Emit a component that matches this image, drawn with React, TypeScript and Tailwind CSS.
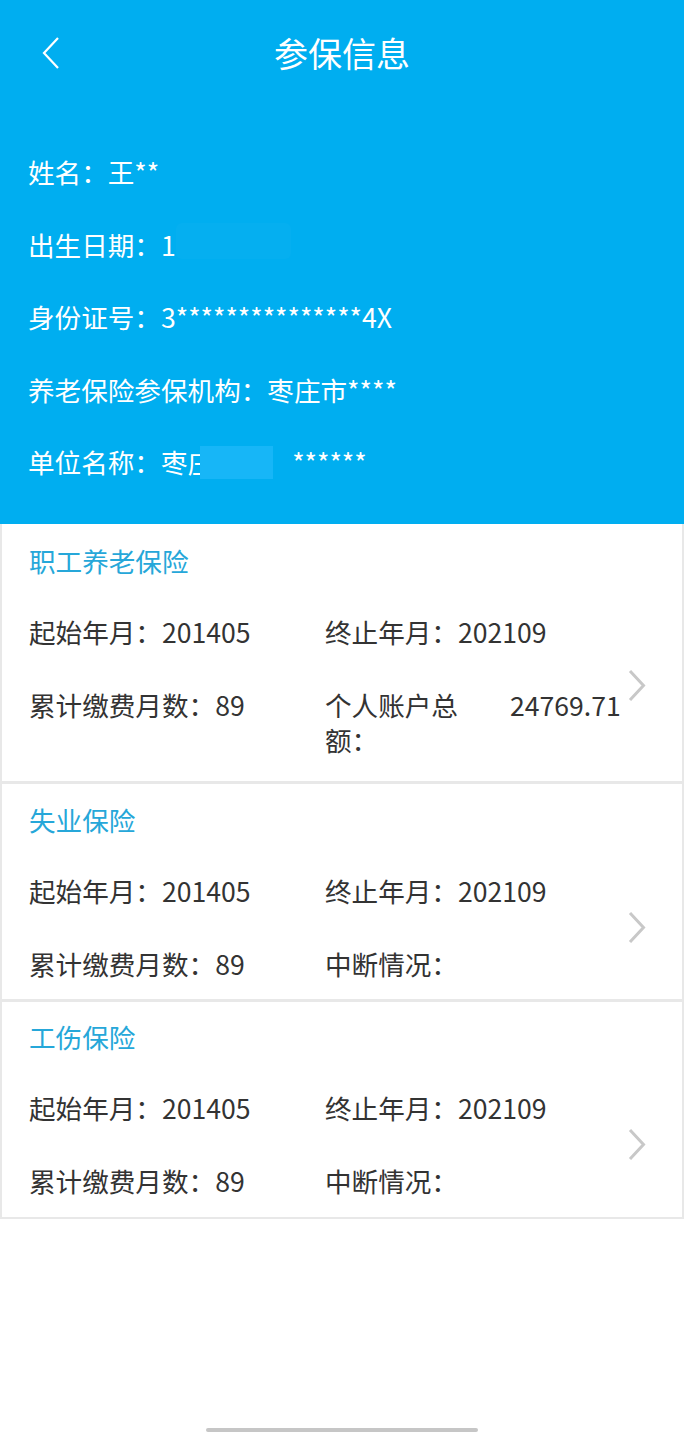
import React from "react";

const font = { fontFamily: '"Noto Sans CJK SC", "Noto Sans", sans-serif' };

function Chevron() {
  return (
    <svg width="18" height="33" viewBox="0 0 18 33" className="shrink-0">
      <polyline points="2,2 15.5,16.5 2,31" fill="none" stroke="#c8c8c8" strokeWidth="3" strokeLinejoin="miter" />
    </svg>
  );
}

type Item = { label: string; value: string; narrow?: boolean };

function Card({ title, rows, last, pt, pb }: { title: string; rows: Item[][]; last?: boolean; pt: string; pb: string }) {
  return (
    <div className={`bg-white border-x-2 border-[#e8e8e8] ${last ? "border-b-2" : "border-b-[3px]"} pl-[27px] pr-[36px] ${pt} ${pb}`}>
      <div className="text-[26.6px] leading-[36px] text-[#26a7d9]">{title}</div>
      <div className="flex items-center mt-[35px]">
        <div className="flex flex-col gap-y-[37px] w-[600px]">
          {rows.map((r, i) => (
            <div key={i} className="grid grid-cols-[296px_1fr] text-[26.6px] leading-[36px] text-[#333333]">
              {r.map((it, j) =>
                it.narrow ? (
                  <div key={j} className="flex items-start">
                    <span className="w-[136px] leading-[35px]">{it.label}</span>
                    <span className="ml-[49px]">{it.value}</span>
                  </div>
                ) : (
                  <div key={j} className="whitespace-nowrap">
                    {it.label}
                    {it.value}
                  </div>
                )
              )}
            </div>
          ))}
        </div>
        <Chevron />
      </div>
    </div>
  );
}

export default function App() {
  return (
    <div className="min-h-[1434px] flex flex-col bg-white" style={font}>
      <div className="bg-[#00aef0] text-white pb-[44px]">
        <div className="relative h-[108px] flex items-center justify-center">
          <svg width="20" height="34" viewBox="0 0 20 34" className="absolute left-[41px] top-[36px]">
            <polyline points="17,2 3,17 17,32" fill="none" stroke="#ffffff" strokeWidth="2.2" />
          </svg>
          <div className="text-[34px] leading-[40px] -mt-[2px]">参保信息</div>
        </div>
        <div className="flex flex-col gap-y-[36.5px] pt-[46px] pl-[28px] text-[26.6px] leading-[36px]">
          <div>姓名：王**</div>
          <div className="relative">
            出生日期：1
            <span className="absolute left-[148px] top-[-4px] w-[115px] h-[36px] bg-white/[0.02] rounded-[6px]" />
          </div>
          <div>身份证号：3***************4X</div>
          <div>养老保险参保机构：枣庄市****</div>
          <div className="relative">
            单位名称：枣庄<span className="ml-[78px]">******</span>
            <span className="absolute left-[172px] top-[2px] w-[73px] h-[33px] bg-[#17b6f7]" />
          </div>
        </div>
      </div>

      <Card
        title="职工养老保险"
        pt="pt-[19px]"
        pb="pb-[24px]"
        rows={[
          [
            { label: "起始年月：", value: "201405" },
            { label: "终止年月：", value: "202109" },
          ],
          [
            { label: "累计缴费月数：", value: "89" },
            { label: "个人账户总额：", value: "24769.71", narrow: true },
          ],
        ]}
      />
      <Card
        title="失业保险"
        pt="pt-[18px]"
        pb="pb-[17px]"
        rows={[
          [
            { label: "起始年月：", value: "201405" },
            { label: "终止年月：", value: "202109" },
          ],
          [
            { label: "累计缴费月数：", value: "89" },
            { label: "中断情况：", value: "" },
          ],
        ]}
      />
      <Card
        title="工伤保险"
        last
        pt="pt-[17px]"
        pb="pb-[18px]"
        rows={[
          [
            { label: "起始年月：", value: "201405" },
            { label: "终止年月：", value: "202109" },
          ],
          [
            { label: "累计缴费月数：", value: "89" },
            { label: "中断情况：", value: "" },
          ],
        ]}
      />

      <div className="flex-1" />
      <div className="flex justify-center pb-[2px]">
        <div className="w-[272px] h-[4px] rounded-full bg-[#c6c6c6]" />
      </div>
    </div>
  );
}
